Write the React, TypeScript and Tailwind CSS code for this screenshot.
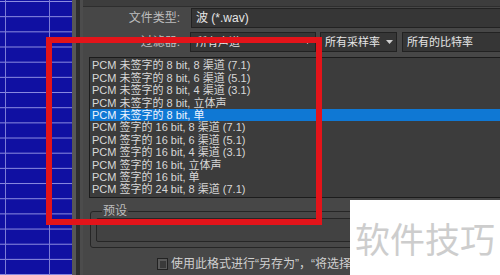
import React from "react";

const items = [
  "PCM 未签字的 8 bit, 8 渠道 (7.1)",
  "PCM 未签字的 8 bit, 6 渠道 (5.1)",
  "PCM 未签字的 8 bit, 4 渠道 (3.1)",
  "PCM 未签字的 8 bit, 立体声",
  "PCM 未签字的 8 bit, 单",
  "PCM 签字的 16 bit, 8 渠道 (7.1)",
  "PCM 签字的 16 bit, 6 渠道 (5.1)",
  "PCM 签字的 16 bit, 4 渠道 (3.1)",
  "PCM 签字的 16 bit, 立体声",
  "PCM 签字的 16 bit, 单",
  "PCM 签字的 24 bit, 8 渠道 (7.1)",
];

function BlueGrid() {
  const rows = Array.from({ length: 19 }, (_, i) => 1.5 + i * 15.17);
  return (
    <div className="h-full w-[72px] shrink-0 bg-[#1010a2]">
      <svg width="72" height="275" viewBox="0 0 72 275">
        {rows.map((y) => (
          <line key={y} x1="0" x2="72" y1={y} y2={y} stroke="#8c8ce0" strokeWidth="1" />
        ))}
        <line x1="5.5" x2="5.5" y1="0" y2="275" stroke="#7c7cd6" strokeWidth="1" />
        <line x1="49.5" x2="49.5" y1="0" y2="275" stroke="#7c7cd6" strokeWidth="1" />
      </svg>
    </div>
  );
}

function Arrow() {
  return (
    <svg width="7" height="4" viewBox="0 0 7 4" className="shrink-0">
      <path d="M0 0h7L3.5 4z" fill="#cfcfcf" />
    </svg>
  );
}

export default function App() {
  return (
    <div className="relative flex h-[275px] w-[500px] overflow-hidden bg-[#474747] font-['Liberation_Sans','Noto_Sans_CJK_SC',sans-serif] text-[#d8d8d8]">
      <BlueGrid />
      <div className="flex w-[11px] shrink-0">
        <div className="w-[4px] bg-[#575757]" />
        <div className="w-[4px] bg-[#2f2f2f]" />
        <div className="w-[3px] bg-[#4c4c4c]" />
      </div>

      <div className="flex min-w-0 flex-1 flex-col">
        <div className="h-[7px] shrink-0 border-b border-[#2e2e2e] bg-[#3d3d3d]" />

        {/* file type */}
        <div className="mt-[1px] flex h-[20px] shrink-0 items-center text-[12px]">
          <div className="w-[97px] shrink-0 text-right text-[#bdbdbd]">文件类型:</div>
          <div className="ml-[11px] flex h-full w-[330px] shrink-0 items-center border border-[#222] bg-[#363636] pl-[4px] text-[#e6e6e6]">
            波 (*.wav)
          </div>
        </div>

        {/* filters */}
        <div className="mt-[4px] flex h-[20px] shrink-0 items-center text-[11px]">
          <div className="w-[97px] shrink-0 text-right text-[12px] text-[#bdbdbd]">过滤器:</div>
          <div className="ml-[10px] flex h-full w-[126px] shrink-0 items-center justify-between border border-[#222] bg-[#363636] pl-[5px] pr-[4px] text-[#e6e6e6]">
            <span>所有声道</span>
            <Arrow />
          </div>
          <div className="ml-[4px] flex h-full w-[77px] shrink-0 items-center gap-[6px] border border-[#222] bg-[#363636] pl-[4px] text-[#e6e6e6]">
            <span>所有采样率</span>
            <Arrow />
          </div>
          <div className="ml-[5px] flex h-full w-[120px] shrink-0 items-center border border-[#222] bg-[#363636] pl-[4px] text-[#e6e6e6]">
            所有的比特率
          </div>
        </div>

        {/* format list */}
        <div className="ml-[6px] mt-[5px] h-[141px] w-[440px] shrink-0 overflow-hidden border border-[#1c1c1c] bg-[#3c3c3c] pt-[1.4px] text-[11px]">
          {items.map((t, i) => (
            <div
              key={t}
              className={
                i === 4
                  ? "h-[12.4px] whitespace-nowrap bg-[#0f78d4] pl-[2px] leading-[12.4px] text-[#eef4ff]"
                  : "h-[12.4px] whitespace-nowrap pl-[2px] leading-[12.4px]"
              }
            >
              {t}
            </div>
          ))}
        </div>

        {/* presets */}
        <fieldset className="ml-[7px] mt-[6px] w-[440px] shrink-0 rounded-[3px] border border-[#262626] px-[5px] pb-[5px]">
          <legend className="ml-[6px] px-[1px] text-[12px] leading-[14px] text-[#bdbdbd]">预设</legend>
          <div className="h-[24px] rounded-[2px] border border-[#262626] bg-[#424242]" />
        </fieldset>

        {/* checkbox */}
        <div className="ml-[74px] mt-[10px] flex h-[12px] shrink-0 items-center gap-[3px] whitespace-nowrap text-[12px] leading-[12px] text-[#d0d0d0]">
          <div className="flex h-[12px] w-[11px] shrink-0 items-center justify-center border border-[#222] bg-[#5a5a5a]">
            <div className="h-[7px] w-[6px] bg-[#3a3a3a]" />
          </div>
          <span>使用此格式进行“另存为”，“将选择导出”</span>
        </div>
      </div>

      {/* red highlight frame */}
      <div className="absolute left-[46px] top-[37px] h-[188px] w-[276px] border-[6px] border-[#e3141a]" />

      {/* watermark */}
      <div className="absolute left-[350px] top-[200px] flex h-[75px] w-[150px] items-center justify-center bg-white font-['Noto_Sans_CJK_SC',sans-serif] text-[35px] leading-none text-[#cdcdcd]">
        软件技巧
      </div>
    </div>
  );
}
